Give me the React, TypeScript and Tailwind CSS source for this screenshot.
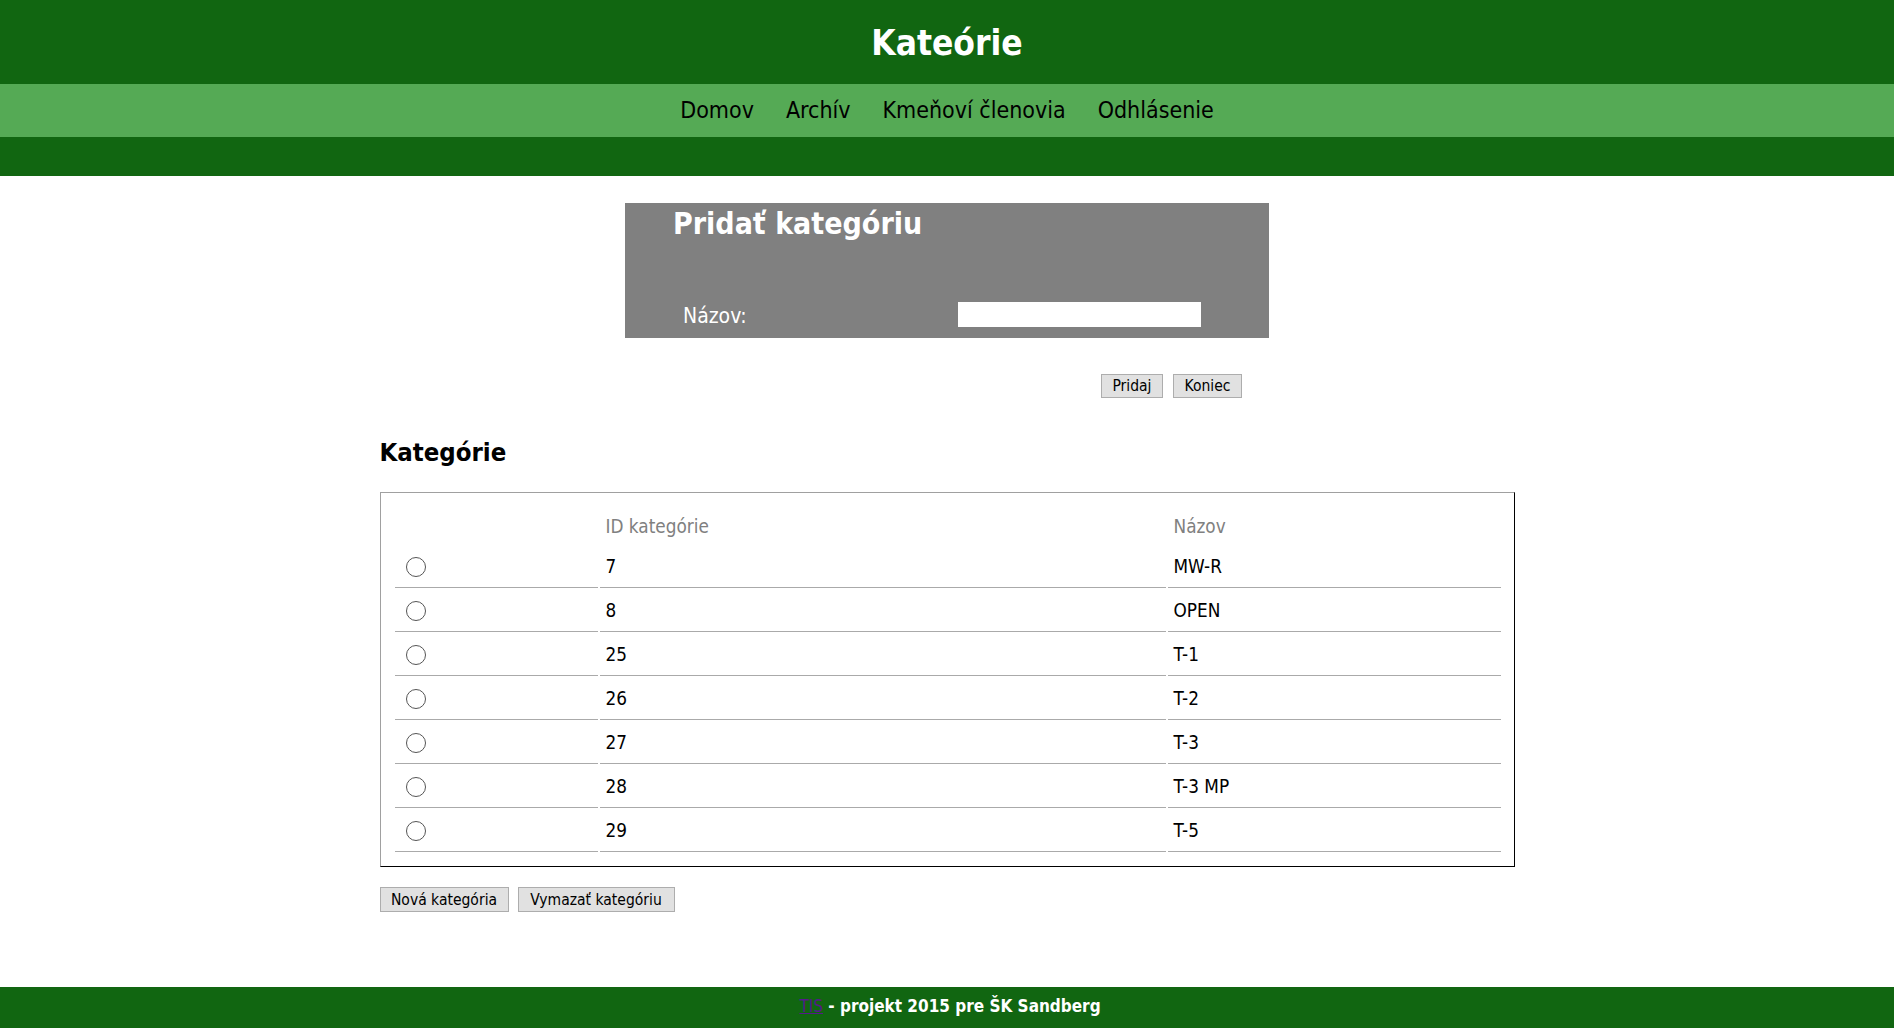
import React from "react";

const rows: [string, string][] = [
  ["7", "MW-R"],
  ["8", "OPEN"],
  ["25", "T-1"],
  ["26", "T-2"],
  ["27", "T-3"],
  ["28", "T-3 MP"],
  ["29", "T-5"],
];

export default function App() {
  return (
    <div className="w-[1894px] min-h-[1028px] bg-white font-['DejaVu_Sans_Condensed','DejaVu_Sans',sans-serif] text-black flex flex-col">
      <header className="h-[84px] bg-[#116611] flex items-center justify-center pt-[2px]">
        <h1 className="text-white font-bold text-[35px] leading-none">Kateórie</h1>
      </header>
      <nav className="h-[53px] bg-[#55aa55] flex items-center justify-center gap-[32px] text-[23px] leading-none">
        <a>Domov</a>
        <a>Archív</a>
        <a>Kmeňoví členovia</a>
        <a>Odhlásenie</a>
      </nav>
      <div className="h-[39px] bg-[#116611]" />

      <main className="flex flex-col items-center">
        <section className="mt-[27px] w-[644px] h-[135px] bg-[#808080] pt-[3px] text-white">
          <h2 className="pl-[48px] font-bold text-[30px] leading-[36px]">Pridať kategóriu</h2>
          <div className="mt-[60px] flex items-center">
            <label className="ml-[58px] w-[275px] h-[25px] text-[21px] leading-[22px] pt-[3px]">Názov:</label>
            <div className="w-[243px] h-[25px] bg-white" />
          </div>
        </section>
        <div className="w-[644px] flex justify-end gap-[10px] pr-[27px] mt-[36px]">
          <button className="w-[62px] h-[24px] pt-[2px] bg-[#e1e1e1] border border-[#adadad] text-[15.5px] leading-none text-black">Pridaj</button>
          <button className="w-[69px] h-[24px] pt-[2px] bg-[#e1e1e1] border border-[#adadad] text-[15.5px] leading-none text-black">Koniec</button>
        </div>

        <div className="w-[1135px] flex flex-col">
          <h2 className="mt-[39px] mb-[25px] font-bold text-[25.5px] leading-[30px]">Kategórie</h2>
          <div className="border border-t-[#a0a0a0] border-l-[#a0a0a0] border-r-black border-b-black pt-[14px] pl-[14px] pr-[13px] pb-[14px]">
            <div className="grid grid-cols-[203px_566px_333px] gap-[2px] text-[18.8px]">
              <div className="h-[37px]" />
              <div className="h-[37px] flex items-center pl-[6px] pt-[4px] text-[#808080]">ID kategórie</div>
              <div className="h-[37px] flex items-center pl-[6px] pt-[4px] text-[#808080]">Názov</div>
              {rows.map(([id, name]) => (
                <React.Fragment key={id}>
                  <div className="h-[42px] border-b border-[#aaaaaa] flex items-center pl-[11px]">
                    <span className="w-[20px] h-[20px] rounded-full border border-[#555555] bg-white" />
                  </div>
                  <div className="h-[42px] border-b border-[#aaaaaa] flex items-center pl-[6px] pt-[2px]">{id}</div>
                  <div className="h-[42px] border-b border-[#aaaaaa] flex items-center pl-[6px] pt-[2px]">{name}</div>
                </React.Fragment>
              ))}
            </div>
          </div>
          <div className="mt-[20px] flex gap-[9px]">
            <button className="w-[129px] h-[25px] pt-[2px] bg-[#e1e1e1] border border-[#adadad] text-[15.5px] leading-none text-black">Nová kategória</button>
            <button className="w-[157px] h-[25px] pt-[2px] bg-[#e1e1e1] border border-[#adadad] text-[15.5px] leading-none text-black">Vymazať kategóriu</button>
          </div>
        </div>
      </main>

      <footer className="mt-[75px] h-[41px] bg-[#116611] flex items-center justify-center pl-[6px] pb-[3px] text-[17px] leading-none text-white">
        <a className="text-[#551a8b] underline">TIS</a>
        <span className="font-bold">&nbsp;- projekt 2015 pre ŠK Sandberg</span>
      </footer>
    </div>
  );
}
